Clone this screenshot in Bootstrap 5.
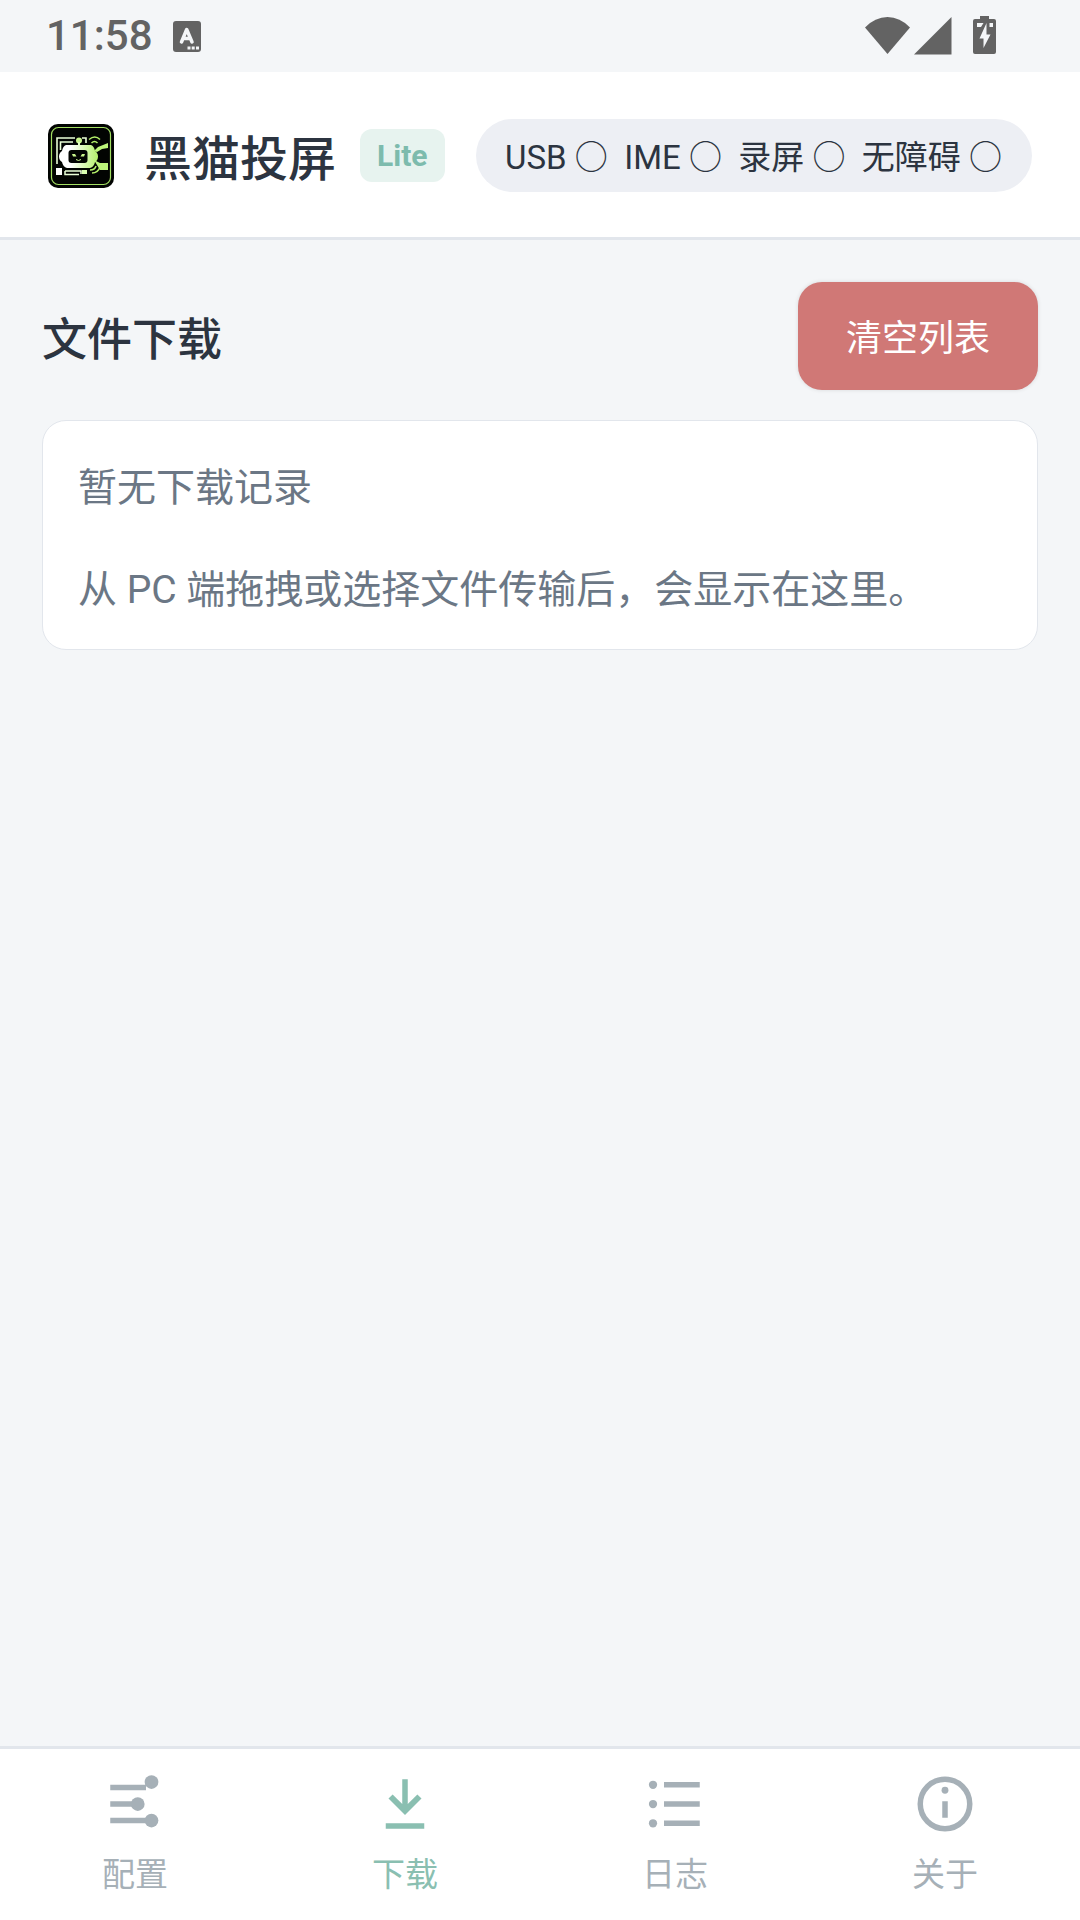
<!DOCTYPE html>
<html lang="zh-CN">
<head>
<meta charset="utf-8">
<meta name="viewport" content="width=device-width, initial-scale=1">
<title>黑猫投屏</title>
<link href="https://cdn.jsdelivr.net/npm/bootstrap@5.3.0/dist/css/bootstrap.min.css" rel="stylesheet">
<style>
  body { background: #f4f6f8; color: #2c3440; font-family: Roboto, "Noto Sans CJK SC", sans-serif; }
  .status-bar { height: 72px; padding: 0 83px 0 46px; color: #636363; font-size: 42px; line-height: 72px; font-weight: 500; }
  .status-bar svg { display: block; }
  .app-header { height: 168px; padding: 2px 48px 0; border-bottom: 3px solid #e2e6ec; }
  .app-name { font-size: 48px; line-height: 72px; font-weight: 500; margin: 0 24px 0 30px; padding-top: 8px; }
  .edition { font-size: 30px; line-height: 53px; padding: 0 17px; border-radius: 12px; background: #e7f3ef; color: #7dbbad; }
  .state-pill { font-size: 33px; line-height: 68px; padding: 5px 30px 0 29px; border-radius: 37px; background: #edeff4; white-space: pre; }
  main { padding: 42px; }
  .section-title { font-size: 45px; line-height: 66px; font-weight: 500; padding-top: 10px; }
  .btn-clear { --bs-btn-bg: #d07876; --bs-btn-color: #fff; --bs-btn-border-width: 0; --bs-btn-hover-bg: #c46a68; --bs-btn-hover-color: #fff;
    --bs-btn-border-radius: 24px; --bs-btn-font-size: 36px; --bs-btn-line-height: 54px;
    padding: 30px 48px 24px; box-shadow: 0 0 4px rgba(0,0,0,.12); }
  .empty-card { --bs-card-border-radius: 24px; --bs-card-border-color: #e2e6ec; margin-top: 30px; color: #6b7785; font-size: 39px; line-height: 57px; }
  .empty-card .card-body { padding: 39px 35px 30px; }
  .empty-card p + p { margin-top: 45px; }
  .tab-bar { height: 174px; border-top: 3px solid #e2e6ec; }
  .tab-bar a { color: #a6b0b7; font-size: 33px; line-height: 48px; padding-top: 22px; }
  .tab-bar a.active { color: #8abfb1; }
  .tab-bar svg { width: 66px; height: 66px; margin-bottom: 14px; }
</style>
</head>
<body class="d-flex flex-column min-vh-100">
<div class="status-bar d-flex align-items-center">
  <span>11:58</span>
  <svg class="ms-3" width="36" height="36" viewBox="0 0 36 36" aria-hidden="true">
    <rect x="4" y="3" width="28" height="31" rx="3" fill="#636363"/>
    <path d="M12.500 24L17.700 11.500L23 24M14.300 20.500H21" fill="none" stroke="#f4f6f8" stroke-width="3.500" stroke-linejoin="round" stroke-linecap="round"/>
    <path d="M18.500 28.500h3v3h-3zM22.700 28.500h3v3h-3zM27 28.500h3v3h-3z" fill="#f4f6f8"/>
  </svg>
  <svg class="ms-auto" width="132" height="40" viewBox="0 0 132 40" fill="#636363" aria-hidden="true">
    <path d="M0 11.500Q10 1 22.500 1T45 11.500L22.500 38z"/>
    <path d="M49 38.500L86.500 1V38.500z"/>
    <path d="M115 0h9v3h5q2 0 2 2v31q0 2-2 2h-19q-2 0-2-2V5q0-2 2-2h5z"/>
    <path d="M112 7h6.500l-2.500 4h-4zM124.500 7h3.500v4h-3.500zM121.500 7v11.500h4l-7 13.500v-9.500h-4z" fill="#f4f6f8"/>
  </svg>
</div>
<header class="app-header bg-white d-flex align-items-center">
  <svg width="66" height="64" viewBox="0 0 66 64" role="img" aria-label="黑猫投屏">
    <defs><linearGradient id="glow"><stop offset=".3" stop-color="#fff"/><stop offset="1" stop-color="#b4f06a"/></linearGradient></defs>
    <rect width="66" height="64" rx="10" fill="#020402"/>
    <rect x="3.500" y="3.500" width="59" height="57" rx="7" fill="none" stroke="#a3df62" stroke-width="1.200"/>
    <path d="M9 40V14H27M34 14H38V19M12.500 26V18H25" fill="none" stroke="#eaffd8" stroke-width="1.600"/>
    <path d="M17 47H33V50M17 47V50.500H31" fill="none" stroke="#eaffd8" stroke-width="1.500"/>
    <rect x="8" y="44" width="6" height="7" fill="#fff"/>
    <rect x="34" y="46" width="5" height="4" fill="#d9ffb0"/>
    <circle cx="31" cy="16.500" r="3" fill="#c9f58c"/><path d="M30 18h2v6h-2z" fill="#dfffbe"/>
    <path d="M18 21H43Q46 22 47 27Q50 29 50 32.500Q50 36 47 38Q46 43 42 44H19Q15 43 14 38Q11 36 11 32.500Q11 29 14 27Q15 22 18 21Z" fill="url(#glow)"/>
    <rect x="20.500" y="26" width="19" height="13" rx="3" fill="#020402"/>
    <path d="M24 30h3l1.500 2.500h-3.500zM37 30h-3l-1.500 2.500h3.500z" fill="#c9f58c"/><path d="M28 35.500q2.500 2 5 0" fill="none" stroke="#c9f58c"/>
    <path d="M41 15.500q6-5 11 0M43.500 19q3-3 6 0M44 49q6 0 8-6M42 46q5 0 6-4" fill="none" stroke="#b4f06a" stroke-width="1.500"/>
    <path d="M46 27l4-4 10-4v5l-6 1-5 3zM46 36l6 3h8v7h-8l-3-5z" fill="#bdf57a"/>
  </svg>
  <h1 class="app-name mb-0">黑猫投屏</h1>
  <span class="edition fw-bold">Lite</span>
  <div class="state-pill ms-auto">USB ○  IME ○  录屏 ○  无障碍 ○</div>
</header>
<main class="flex-grow-1">
  <div class="d-flex align-items-center justify-content-between">
    <h2 class="section-title mb-0">文件下载</h2>
    <button type="button" class="btn btn-clear">清空列表</button>
  </div>
  <section class="card empty-card">
    <div class="card-body">
      <p class="mb-0">暂无下载记录</p>
      <p class="mb-0">从 PC 端拖拽或选择文件传输后，会显示在这里。</p>
    </div>
  </section>
</main>
<nav class="tab-bar bg-white row g-0 text-center">
  <a href="#config" class="col d-flex flex-column align-items-center text-decoration-none">
    <svg viewBox="0 0 24 24" fill="currentColor" aria-hidden="true"><path d="M3 5h13v2H3zM3 11h10v2H3zM3 17h14v2H3z"/><circle cx="18" cy="4" r="2.500"/><circle cx="13" cy="12" r="2.500"/><circle cx="18" cy="18" r="2.500"/></svg>
    配置</a>
  <a href="#download" class="col d-flex flex-column align-items-center text-decoration-none active" aria-current="page">
    <svg viewBox="0 0 24 24" fill="currentColor" aria-hidden="true"><path d="M11 3h2v9l3.500-3.500L18 10l-6 6-6-6 1.500-1.500L11 12zM5 19h14v2H5z"/></svg>
    下载</a>
  <a href="#log" class="col d-flex flex-column align-items-center text-decoration-none">
    <svg viewBox="0 0 24 24" fill="currentColor" aria-hidden="true"><circle cx="4" cy="5" r="1.500"/><circle cx="4" cy="12" r="1.500"/><circle cx="4" cy="19" r="1.500"/><path d="M8 4h13v2H8zM8 11h13v2H8zM8 18h13v2H8z"/></svg>
    日志</a>
  <a href="#about" class="col d-flex flex-column align-items-center text-decoration-none">
    <svg viewBox="0 0 24 24" fill="currentColor" aria-hidden="true"><circle cx="12" cy="12" r="9" fill="none" stroke="currentColor" stroke-width="2"/><circle cx="12" cy="7" r="1.250"/><path d="M11 11h2v6h-2z"/></svg>
    关于</a>
</nav>
<script src="https://cdn.jsdelivr.net/npm/bootstrap@5.3.0/dist/js/bootstrap.bundle.min.js"></script>
</body>
</html>
